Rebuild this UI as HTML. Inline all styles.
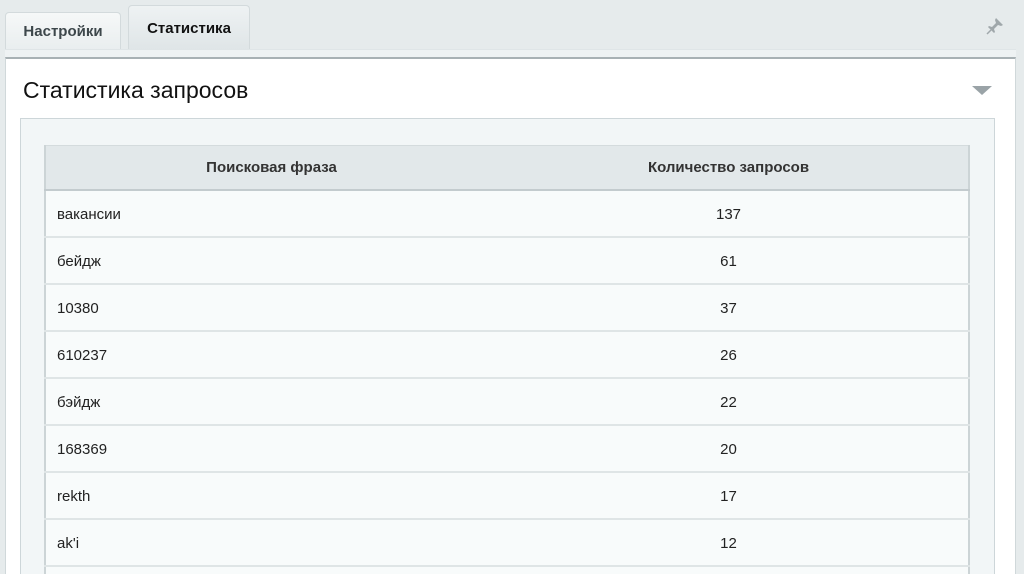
<!DOCTYPE html>
<html style="width:1024px;height:574px;overflow:hidden"><head><meta charset="utf-8"><style>
*{margin:0;padding:0;box-sizing:border-box}
body{width:1024px;height:574px;overflow:hidden;background:#e6ebec;font-family:"Liberation Sans",sans-serif;position:relative}
.tab{position:absolute;border:1px solid #d3dadc;border-bottom:none;border-radius:4px 4px 0 0;background:linear-gradient(#f6f8f8,#e9eeef);font-size:14px;font-weight:bold;color:#3a4448;text-align:center}
.strip{position:absolute;left:5px;top:49px;width:1011px;height:8px;background:#eef2f3;border-top:1px solid #dfe5e7}
.panel{position:absolute;left:5px;top:57px;width:1011px;height:517px;overflow:hidden;background:#fff;border-top:2px solid #a8b1b4;border-left:1px solid #d0d8da;border-right:1px solid #d0d8da}
h1{position:absolute;left:17px;top:18px;font-size:23px;font-weight:normal;color:#111}
.tri{position:absolute;left:966px;top:27px;width:0;height:0;border-left:10px solid transparent;border-right:10px solid transparent;border-top:9px solid #9aa3a7}
.inner{position:absolute;left:14px;top:59px;width:975px;height:458px;overflow:hidden;background:#f2f6f7;border:1px solid #cdd6d9;border-bottom:none}
table{position:absolute;left:23px;top:26px;width:926px;border-collapse:collapse;background:#f8fbfb}
th{height:44px;background:#e2e8ea;font-size:15px;font-weight:bold;color:#333;border-bottom:2px solid #c3cbce;border-top:1px solid #d4dbdd}
td{height:47px;font-size:15px;color:#222;border-bottom:2px solid #dfe5e6;padding-top:2px}
td:first-child{padding-left:11px;width:452px}
td:last-child{text-align:center;padding-right:8px}
th:last-child{padding-right:8px}
tr>*:first-child{border-left:2px solid #ccd4d6}
tr>*:last-child{border-right:2px solid #ccd4d6}
</style></head><body>
<div class="tab" style="left:5px;top:12px;width:116px;height:38px;line-height:38px;color:#3d474b;font-size:15px">Настройки</div>
<div class="tab" style="left:128px;top:5px;width:122px;height:45px;line-height:46px;background:linear-gradient(#eef2f3,#dfe5e7);color:#111;font-size:15px">Статистика</div>
<svg style="position:absolute;left:986px;top:17px" width="18" height="18" viewBox="0 0 18 18"><path d="M10 1 L17 8 L15 9 L12 8 L8 12 L9 15 L8 16 L2 10 L3 9 L6 10 L10 6 L9 3 Z" fill="#a0a8ab"/><path d="M5 13 L1 17" stroke="#a0a8ab" stroke-width="1.5"/></svg>
<div class="strip"></div>
<div class="panel">
<h1>Статистика запросов</h1>
<div class="tri"></div>
<div class="inner">
<table>
<tr><th>Поисковая фраза</th><th>Количество запросов</th></tr>
<tr><td>вакансии</td><td>137</td></tr>
<tr><td>бейдж</td><td>61</td></tr>
<tr><td>10380</td><td>37</td></tr>
<tr><td>610237</td><td>26</td></tr>
<tr><td>бэйдж</td><td>22</td></tr>
<tr><td>168369</td><td>20</td></tr>
<tr><td>rekth</td><td>17</td></tr>
<tr><td>ak'i</td><td>12</td></tr>
<tr><td>&nbsp;</td><td>&nbsp;</td></tr>
</table>
</div>
</div>
</body></html>
